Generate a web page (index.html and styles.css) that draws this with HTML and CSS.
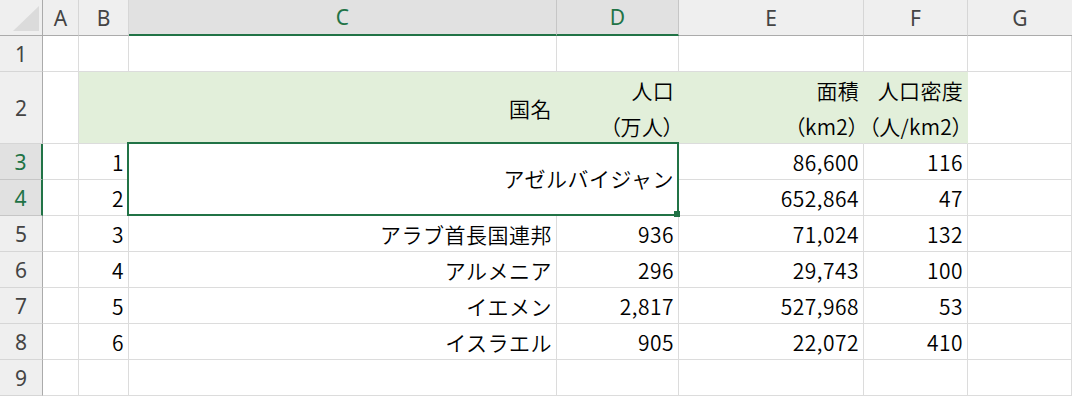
FILE: index.html
```html
<!DOCTYPE html>
<html lang="ja">
<head>
<meta charset="utf-8">
<title>Sheet</title>
<link rel="stylesheet" href="styles.css">
</head>
<body>
<div class="sheet">
  <!-- header row -->
  <div class="corner"><svg width="42" height="35" viewBox="0 0 42 35"><polygon points="39,6 39,31 13,31" fill="#dbdbdb"/></svg></div>
  <div class="ch">A</div>
  <div class="ch">B</div>
  <div class="ch sel">C</div>
  <div class="ch sel">D</div>
  <div class="ch">E</div>
  <div class="ch">F</div>
  <div class="ch last">G</div>

  <!-- row 1 -->
  <div class="rh">1</div>
  <div class="c"></div><div class="c"></div><div class="c"></div><div class="c"></div><div class="c"></div><div class="c"></div><div class="c"></div>

  <!-- row 2 -->
  <div class="rh">2</div>
  <div class="c"></div>
  <div class="c fill"></div>
  <div class="c fill">国名</div>
  <div class="c fill two">人口<br>（万人）</div>
  <div class="c fill two">面積<br>（km2）</div>
  <div class="c fill two">人口密度<br>（人/km2）</div>
  <div class="c"></div>

  <!-- row 3 -->
  <div class="rh rsel">3</div>
  <div class="c"></div>
  <div class="c">1</div>
  <div class="c merged">アゼルバイジャン</div>
  <div class="c">86,600</div>
  <div class="c">116</div>
  <div class="c"></div>

  <!-- row 4 -->
  <div class="rh rsel">4</div>
  <div class="c"></div>
  <div class="c">2</div>
  <div class="c">652,864</div>
  <div class="c">47</div>
  <div class="c"></div>

  <!-- row 5 -->
  <div class="rh">5</div>
  <div class="c"></div><div class="c">3</div><div class="c">アラブ首長国連邦</div><div class="c">936</div><div class="c">71,024</div><div class="c">132</div><div class="c"></div>

  <!-- row 6 -->
  <div class="rh">6</div>
  <div class="c"></div><div class="c">4</div><div class="c">アルメニア</div><div class="c">296</div><div class="c">29,743</div><div class="c">100</div><div class="c"></div>

  <!-- row 7 -->
  <div class="rh">7</div>
  <div class="c"></div><div class="c">5</div><div class="c">イエメン</div><div class="c">2,817</div><div class="c">527,968</div><div class="c">53</div><div class="c"></div>

  <!-- row 8 -->
  <div class="rh">8</div>
  <div class="c"></div><div class="c">6</div><div class="c">イスラエル</div><div class="c">905</div><div class="c">22,072</div><div class="c">410</div><div class="c"></div>

  <!-- row 9 -->
  <div class="rh">9</div>
  <div class="c"></div><div class="c"></div><div class="c"></div><div class="c"></div><div class="c"></div><div class="c"></div><div class="c"></div>
</div>
</body>
</html>
```
FILE: styles.css
```css
* { box-sizing: border-box; }
html, body { margin: 0; padding: 0; background: #fff; }
body { width: 1072px; height: 396px; overflow: hidden; }

.sheet {
  display: grid;
  grid-template-columns: 43px 36px 50px 428px 122px 185px 104px 104px;
  grid-template-rows: 36px 36px 72px repeat(7, 36px);
  font-family: "Noto Sans CJK JP", "Noto Sans", sans-serif;
  font-weight: 350;
  font-size: 21px;
  color: #000;
}

.corner {
  background: #efefef;
  border-right: 1px solid #ababab;
  border-bottom: 1px solid #ababab;
}
.corner svg { display: block; }

.ch, .rh {
  background: #efefef;
  color: #444;
  font-family: "Noto Sans", "Open Sans", sans-serif;
  font-weight: 400;
  font-size: 21px;
  display: flex;
  align-items: center;
  justify-content: center;
}
.ch {
  border-right: 1px solid #d6d6d6;
  border-bottom: 1px solid #ababab;
}
.ch.last { border-right: none; }
.ch.sel {
  background: #e1e1e1;
  color: #217346;
  border-bottom: 2px solid #217346;
  border-right-color: #c6c6c6;
}
.rh {
  border-right: 1px solid #ababab;
  border-bottom: 1px solid #d6d6d6;
}
.rh.rsel {
  background: #e1e1e1;
  color: #217346;
  border-right: 2px solid #217346;
  border-bottom-color: #c6c6c6;
}

.c {
  border-right: 1px solid #dcdcdc;
  border-bottom: 1px solid #dcdcdc;
  display: flex;
  align-items: center;
  justify-content: flex-end;
  padding-right: 4px;
  white-space: nowrap;
  letter-spacing: 0.5px;
}
.c.fill {
  background: #e2efda;
  border-right-color: #e2efda;
}
.c.two {
  text-align: right;
  line-height: 36px;
  padding-top: 1px;
  font-feature-settings: "palt";
  letter-spacing: 0.3px;
}

.merged {
  grid-column: span 2;
  grid-row: span 2;
  position: relative;
  padding-top: 0;
  padding-bottom: 3px;
}
.merged::after {
  content: "";
  position: absolute;
  left: -2px;
  top: -2px;
  right: -1px;
  bottom: -1px;
  border: 2px solid #217346;
}
.merged::before {
  content: "";
  position: absolute;
  right: -2px;
  bottom: -2px;
  width: 6px;
  height: 6px;
  background: #217346;
  z-index: 1;
}
```
